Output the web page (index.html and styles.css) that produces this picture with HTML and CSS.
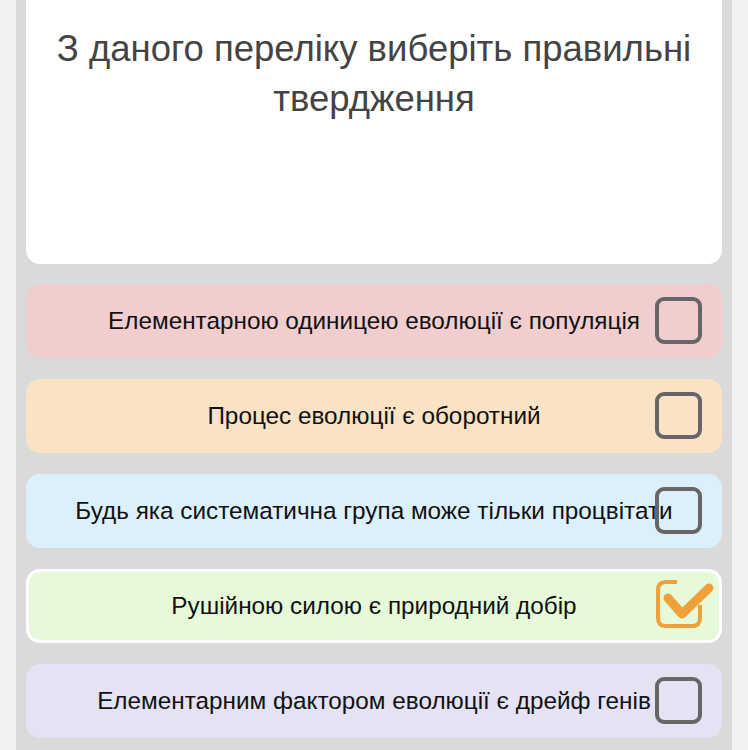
FILE: index.html
```html
<!DOCTYPE html>
<html lang="uk">

<head>
    <meta charset="UTF-8">
    <meta name="viewport" content="width=device-width, initial-scale=1.0">
    <title>Тест</title>

    <link rel="stylesheet" href="styles.css">
</head>

<body>
    <div class="panel">
        <div class="question">
            <h1>З даного переліку виберіть правильні твердження</h1>
        </div>

        <div class="answers">
            <div class="answer pink">
                <span class="text">Елементарною одиницею еволюції є популяція</span>
                <span class="box"></span>
            </div>
            <div class="answer peach">
                <span class="text">Процес еволюції є оборотний</span>
                <span class="box"></span>
            </div>
            <div class="answer blue">
                <span class="text">Будь яка систематична група може тільки процвітати</span>
                <span class="box"></span>
            </div>
            <div class="answer green selected">
                <span class="text">Рушійною силою є природний добір</span>
                <svg class="tick" width="62" height="50" viewBox="0 0 62 50">
                    <path d="M48 25 V38 Q48 46 40 46 H14 Q6 46 6 38 V10 Q6 2 14 2 H25" fill="none" stroke="#f0a038" stroke-width="4"/>
                    <path d="M16 18 L30 34 L57 8" fill="none" stroke="#f0a038" stroke-width="9" stroke-linecap="round" stroke-linejoin="round"/>
                </svg>
            </div>
            <div class="answer violet">
                <span class="text">Елементарним фактором еволюції є дрейф генів</span>
                <span class="box"></span>
            </div>
        </div>
    </div>
</body>

</html>
```

FILE: styles.css
```css
body {
    margin: 0;
    background-color: #f2f2f2;
    font-family: "Liberation Sans", Arial, sans-serif;
}

.panel {
    margin: 0 16px;
    padding: 0 10px;
    height: 750px;
    background-color: #dadada;
}

.question {
    height: 264px;
    background-color: #ffffff;
    border-radius: 0 0 14px 14px;
    padding: 24px 10px 0 10px;
    box-sizing: border-box;
}

h1 {
    margin: 0;
    text-align: center;
    color: #444444;
    font-size: 36.5px;
    font-weight: normal;
    line-height: 50px;
}

.answers {
    margin-top: 20px;
    display: flex;
    flex-direction: column;
    gap: 21px;
}

.answer {
    position: relative;
    height: 74px;
    border-radius: 14px;
    display: flex;
    align-items: center;
    justify-content: center;
    box-sizing: border-box;
}

.text {
    font-size: 24.3px;
    color: #111111;
    white-space: nowrap;
}

.pink {
    background-color: #f1cdce;
}

.peach {
    background-color: #fae2c4;
}

.blue {
    background-color: #dcf0fb;
}

.green {
    background-color: #e6fad9;
}

.violet {
    background-color: #e4e2f3;
}

.selected {
    border: 3px solid #ffffff;
}

.box {
    position: absolute;
    right: 20px;
    top: 13px;
    width: 47px;
    height: 47px;
    border: 4px solid #676565;
    border-radius: 9px;
    box-sizing: border-box;
}

.tick {
    position: absolute;
    right: 5px;
    top: 8px;
}
```
